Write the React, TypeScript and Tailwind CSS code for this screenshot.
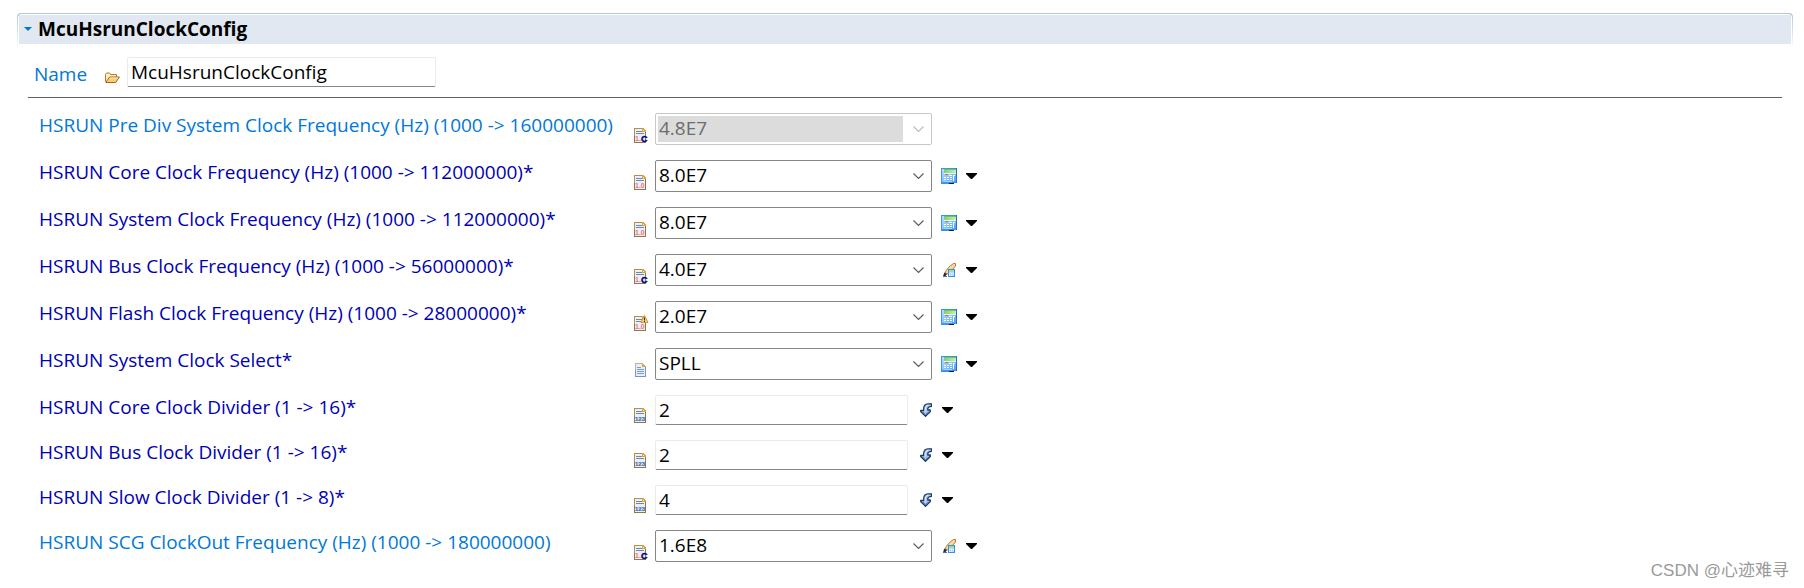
import React from 'react';

type Kind = 'float' | 'int' | 'enum';
type Tool = 'calc' | 'pen' | 'arrow';

interface Field {
    id: string;
    label: string;
    value: string;
    kind: Kind;
    mark?: 'const' | 'warning';
    tool?: Tool;
    muted?: boolean;
    disabled?: boolean;
}

const fields: Field[] = [
    { id: 'preDiv', label: 'HSRUN Pre Div System Clock Frequency (Hz) (1000 -> 160000000)', value: '4.8E7', kind: 'float', mark: 'const', muted: true, disabled: true },
    { id: 'core', label: 'HSRUN Core Clock Frequency (Hz) (1000 -> 112000000)*', value: '8.0E7', kind: 'float', tool: 'calc' },
    { id: 'system', label: 'HSRUN System Clock Frequency (Hz) (1000 -> 112000000)*', value: '8.0E7', kind: 'float', tool: 'calc' },
    { id: 'bus', label: 'HSRUN Bus Clock Frequency (Hz) (1000 -> 56000000)*', value: '4.0E7', kind: 'float', mark: 'const', tool: 'pen' },
    { id: 'flash', label: 'HSRUN Flash Clock Frequency (Hz) (1000 -> 28000000)*', value: '2.0E7', kind: 'float', mark: 'warning', tool: 'calc' },
    { id: 'select', label: 'HSRUN System Clock Select*', value: 'SPLL', kind: 'enum', tool: 'calc' },
    { id: 'coreDiv', label: 'HSRUN Core Clock Divider (1 -> 16)*', value: '2', kind: 'int', tool: 'arrow' },
    { id: 'busDiv', label: 'HSRUN Bus Clock Divider (1 -> 16)*', value: '2', kind: 'int', tool: 'arrow' },
    { id: 'slowDiv', label: 'HSRUN Slow Clock Divider (1 -> 8)*', value: '4', kind: 'int', tool: 'arrow' },
    { id: 'scg', label: 'HSRUN SCG ClockOut Frequency (Hz) (1000 -> 180000000)', value: '1.6E8', kind: 'float', mark: 'const', tool: 'pen', muted: true },
];

function DocIcon({ kind, mark }: { kind: Kind; mark?: Field['mark'] }) {
    if (kind === 'enum') {
        return (
            <svg className="block overflow-visible" width="12" height="15" viewBox="0 0 12 15" shapeRendering="crispEdges">
                <path d="M1 0H8L12 4V14H1Z" fill="#7f93bd" />
                <path d="M1 0H8V1H2V7H1Z" fill="#bdb58c" />
                <path d="M2 1H8V4H11V13H2Z" fill="#e6effa" />
                <path d="M8 0L12 4H8Z" fill="#dca94c" />
                <path d="M3 4H7V5H3ZM3 6H10V7H3ZM3 8H10V9H3ZM3 10H10V11H3Z" fill="#7b9bd0" />
            </svg>
        );
    }
    return (
        <svg className="block overflow-visible" width="12" height="15" viewBox="0 0 12 15">
            <g shapeRendering="crispEdges">
                <path d="M0 0H9L12 3V15H0Z" fill="#8a7a4a" />
                <path d="M0 0H9V1H1V8H0Z" fill="#b8903c" />
                <path d="M1 1H8V4H11V14H1Z" fill="#e9f0fa" />
                <path d="M8 0H9L12 3V4H8Z" fill="#d9a441" />
                <path d="M9 2H10V3H9Z" fill="#fbe6b0" />
                <path d="M2 3H8V4H2ZM2 5H10V6H2Z" fill="#6c87b8" />
            </g>
            {kind === 'int' ? (
                <text x="1" y="13" fontSize="6" fontWeight="700" fontFamily="Liberation Sans, sans-serif" fill="#4a6cab" stroke="#4a6cab" strokeWidth="0.2">123</text>
            ) : (
                <text x="1" y="13" fontSize="7" fontWeight="700" fontFamily="Liberation Sans, sans-serif" fill="#f76f78">
                    {mark === 'const' ? '1.' : '1.0'}
                </text>
            )}
            {mark === 'const' && (
                <text x="7" y="14" fontSize="9" fontWeight="700" fontFamily="Liberation Sans, sans-serif" fill="#00007c" stroke="#00007c" strokeWidth="0.4">C</text>
            )}
            {mark === 'warning' && (
                <g>
                    <path d="M10.5 -0.5L14 6.5H7Z" fill="#f8cf78" stroke="#d09a38" strokeLinejoin="round" />
                    <path d="M10 1.5H11V4.5H10ZM10 5H11V6H10Z" fill="#4a3208" />
                </g>
            )}
        </svg>
    );
}

function FolderIcon() {
    return (
        <svg className="block" width="15" height="12" viewBox="0 0 15 12">
            <path d="M0.5 9.5V2.5L1.5 1H4.5L5.5 2.5H11.5V5" fill="#fdeebc" stroke="#b8792c" />
            <path d="M0.8 10.5L4.5 5H14.4L10.8 10.5Z" fill="#f6cf79" stroke="#a9651f" strokeLinejoin="round" />
            <path d="M5 6H13" stroke="#fdebb5" />
        </svg>
    );
}

function CalcIcon() {
    return (
        <svg className="block" width="16" height="16" viewBox="0 0 16 16" shapeRendering="crispEdges">
            <defs>
                <linearGradient id="calcBody" x1="0" y1="0" x2="1" y2="1">
                    <stop offset="0" stopColor="#b5e0ff" />
                    <stop offset="0.6" stopColor="#7fc0f8" />
                    <stop offset="1" stopColor="#4f9df0" />
                </linearGradient>
                <linearGradient id="calcScreen" x1="0" y1="0" x2="1" y2="0">
                    <stop offset="0" stopColor="#7bd071" />
                    <stop offset="1" stopColor="#c9f2a4" />
                </linearGradient>
            </defs>
            <path d="M0 0H16V15H13V16H0Z" fill="#3f92e8" />
            <path d="M1 1H15V14H1Z" fill="url(#calcBody)" />
            <path d="M15 0H16V15H15Z" fill="#1f70d2" />
            <path d="M3 1H15V5H3Z" fill="url(#calcScreen)" />
            <path d="M3 1H15V2H3Z" fill="#6cc46c" />
            <path d="M3 5H15V6H3Z" fill="#e6f6ff" />
            <path d="M4 6H7V7H4Z" fill="#e0605a" />
            <path d="M8 7H11V8H8ZM12 7H14V8H12ZM3 9H5V10H3ZM6 9H8V10H6ZM9 9H11V10H9ZM12 8H13V13H12ZM3 11H5V12H3ZM6 11H8V12H6ZM9 11H11V12H9Z" fill="#f4fbff" />
            <path d="M3 13H11V14H3Z" fill="#a6d6fb" />
            <path d="M8 15H13V16H8Z" fill="#0a1f44" />
        </svg>
    );
}

function PenIcon() {
    return (
        <svg className="block" width="16" height="16" viewBox="0 0 16 16">
            <path d="M4 11C5 8 8.5 4 12.5 1.5H14.5V4L7.5 12Z" fill="#fbd7a3" stroke="#bd7434" strokeLinejoin="round" />
            <path d="M2 14.8L3.2 10.5L6 12.2L4.5 14Z" fill="#1b2a52" />
            <path d="M2 14.5H6" stroke="#5a6c92" />
            <g shapeRendering="crispEdges">
                <path d="M7 7H14V15H7Z" fill="#3b8fe0" />
                <path d="M8 8H13V14H8Z" fill="#b5dcfa" />
                <path d="M8 8H13V10H8Z" fill="#a0dd97" />
                <path d="M8 11H9V12H8ZM10 11H11V12H10ZM12 11H13V12H12ZM8 13H9V14H8ZM10 13H11V14H10Z" fill="#f2faff" />
            </g>
        </svg>
    );
}

function ArrowIcon() {
    return (
        <svg className="block" width="12" height="14" viewBox="0 0 12 14">
            <path d="M11.5 0.8H8C5 1 3.7 3 3.7 5.5V7.5H0.7V8.5L5.5 13.2L10.3 8.5V7H7.8V5.5C8 4 10 3.6 11.5 3.4Z" fill="#a9c4e4" stroke="#1c3a68" strokeWidth="1.3" strokeLinejoin="round" />
            <path d="M8.5 2C6 2.6 5.2 4.2 5.2 6V8.5" fill="none" stroke="#e4eefa" />
            <path d="M3 9L5.5 11.5L8.5 8.8" fill="none" stroke="#5f86b8" />
        </svg>
    );
}

function ToolMenu({ tool, label }: { tool: Tool; label: string }) {
    return (
        <div className={`flex items-center ${tool === 'arrow' ? 'gap-[10px]' : 'gap-[9px]'}`}>
            <button type="button" aria-label={`Edit ${label}`}>
                {tool === 'calc' && <CalcIcon />}
                {tool === 'pen' && <PenIcon />}
                {tool === 'arrow' && <ArrowIcon />}
            </button>
            <button type="button" aria-label={`Options for ${label}`}>
                <svg className="block" width="11" height="6" viewBox="0 0 11 6">
                    <path d="M0 0H11V1L6 6H5L0 1Z" fill="#000" />
                </svg>
            </button>
        </div>
    );
}

function Combo({ field }: { field: Field }) {
    return (
        <div className={`relative h-8 w-[277px] rounded-xs border ${field.disabled ? 'border-[#c8c8c8]' : 'border-[#868686]'}`}>
            <select
                id={field.id}
                disabled={field.disabled}
                defaultValue={field.value}
                className="block h-full w-full appearance-none border-2 border-r-[28px] border-transparent bg-clip-padding pb-[2px] pl-px text-[19px] leading-6 text-black opacity-100 outline-none disabled:bg-[#dcdcdc] disabled:text-[#6d6d6d]"
            >
                <option>{field.value}</option>
            </select>
            <svg className="pointer-events-none absolute top-3 right-[7px]" width="11" height="7" viewBox="0 0 11 7">
                <path d="M0.5 0.5L5.5 5.5L10.5 0.5" fill="none" stroke={field.disabled ? '#bcbcbc' : '#5c5c5c'} strokeWidth="1.2" />
            </svg>
        </div>
    );
}

const inputStyle = 'block h-[30px] rounded-xs border border-[#ebebeb] border-b-[#868686] bg-white px-[3px] text-[19px] leading-6 text-black outline-none';

function Row({ field }: { field: Field }) {
    return (
        <div className="flex">
            <label htmlFor={field.id} className={`w-[595px] shrink-0 leading-6 whitespace-nowrap ${field.muted ? 'text-[#0078d7]' : 'text-[#0000b4]'}`}>
                {field.label}
            </label>
            <div className="mr-[9px] self-end pb-[2px]">
                <DocIcon kind={field.kind} mark={field.mark} />
            </div>
            {field.kind === 'int' ? (
                <input id={field.id} type="text" defaultValue={field.value} className={`${inputStyle} mr-3 w-[253px]`} />
            ) : (
                <div className="mr-[9px]">
                    <Combo field={field} />
                </div>
            )}
            {field.tool && <ToolMenu tool={field.tool} label={field.label} />}
        </div>
    );
}

function App() {
    return (
        <main className="bg-white pt-[13px] pr-[11px] pb-1 pl-[17px] font-['Open_Sans','Noto_Sans','Noto_Sans_CJK_SC',sans-serif] text-[19px]">
            <div className="rounded-t-sm bg-linear-to-b from-[#b4c6da] to-white px-px pt-px">
                <div className="rounded-t-sm bg-white px-px pt-px pb-[5px]">
                    <h1 className="flex h-[29px] items-center bg-[#e1e8f1] pb-[2px] pl-[5px]">
                        <button type="button" className="flex items-center gap-[6px] font-bold leading-6 text-black">
                            <svg width="8" height="4" viewBox="0 0 8 4">
                                <path d="M0 0H8L4 4Z" fill="#0078d7" />
                            </svg>
                            McuHsrunClockConfig
                        </button>
                    </h1>
                </div>
            </div>

            <div className="mr-[11px] ml-[11px] flex border-b border-[#606060] pt-2 pb-[10px] pl-[6px]">
                <label htmlFor="name" className="w-[71px] pt-[5px] leading-6 text-[#0078d7]">Name</label>
                <div className="mr-[7px] self-end pb-[3px]">
                    <FolderIcon />
                </div>
                <input id="name" type="text" defaultValue="McuHsrunClockConfig" className={`${inputStyle} w-[309px]`} />
            </div>

            <form className="flex flex-col gap-[15px] pt-[15px] pl-[22px]">
                {fields.map((field) => (
                    <Row key={field.id} field={field} />
                ))}
            </form>

            <p className="pr-1 text-right font-['Liberation_Sans','Noto_Sans_CJK_SC',sans-serif] text-[17px] leading-[18px] text-[#9a9a9a]">CSDN @心迹难寻</p>
        </main>
    );
}

export default App;
